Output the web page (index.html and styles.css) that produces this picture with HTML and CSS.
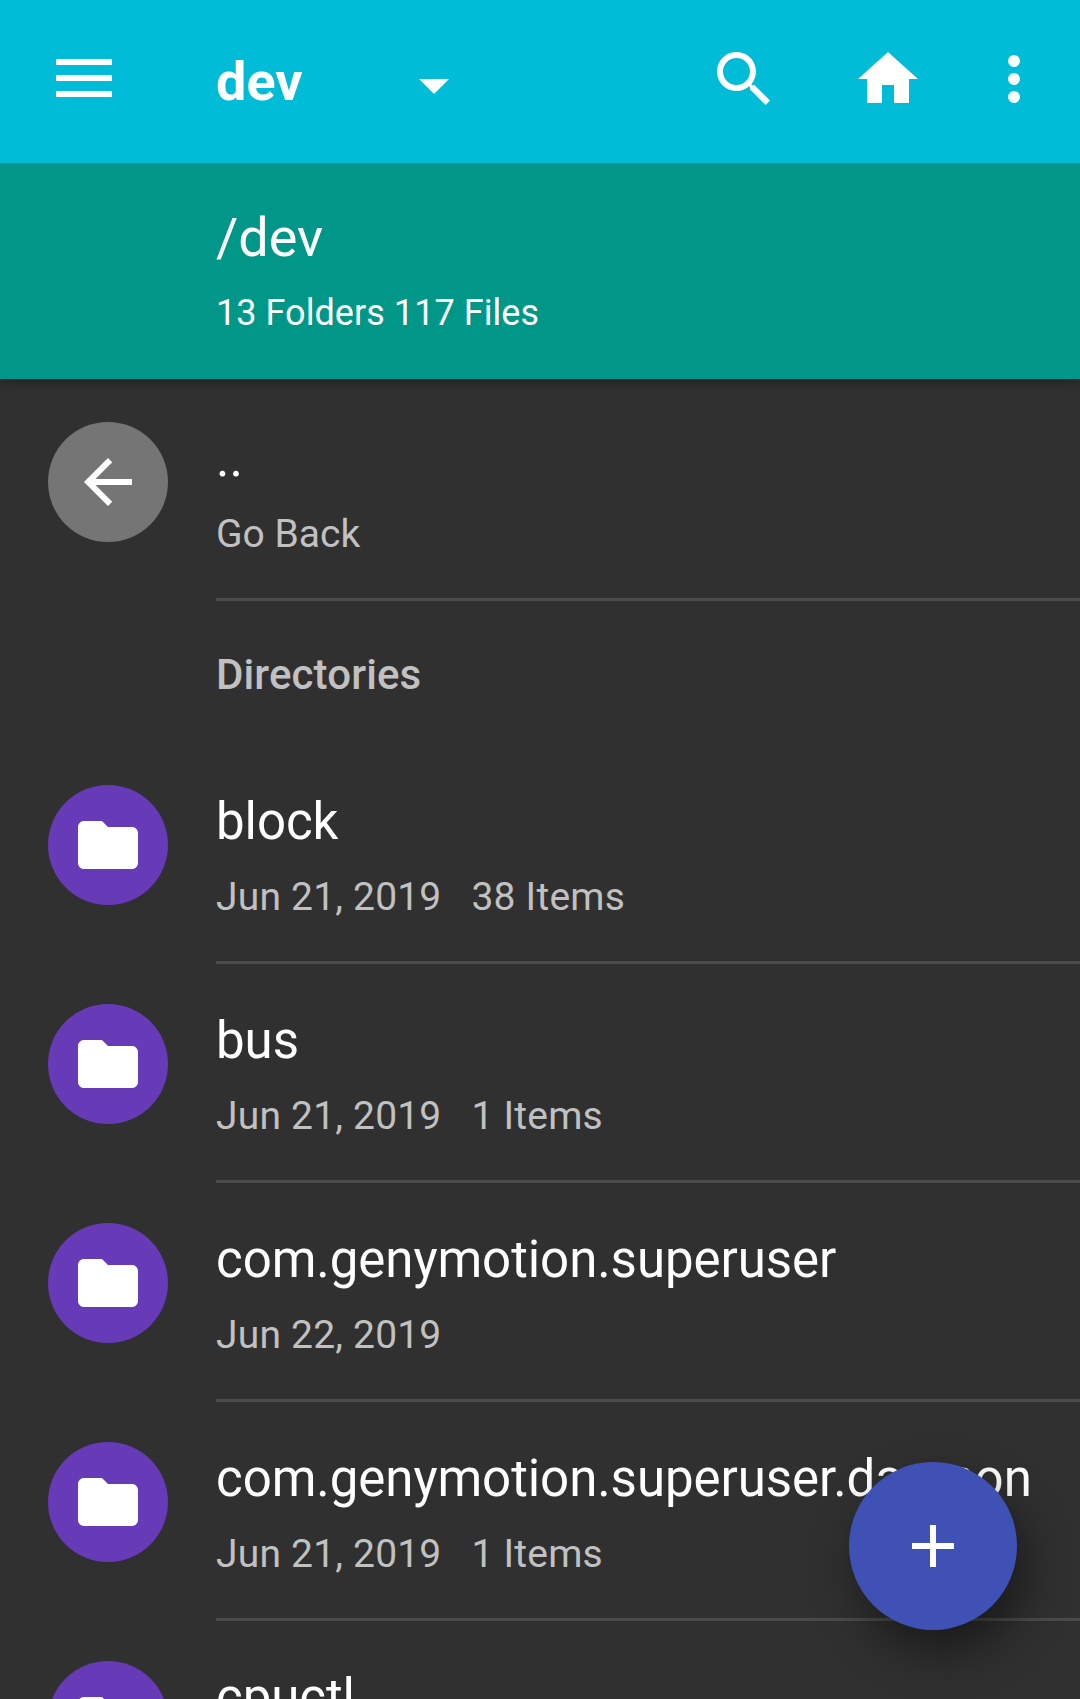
FILE: index.html
```html
<!DOCTYPE html>
<html lang="en">
<head>
<meta charset="utf-8">
<title>dev</title>
<link rel="stylesheet" href="styles.css">
</head>
<body>
<svg class="sprite" aria-hidden="true">
  <symbol id="folder" viewBox="0 0 24 24"><path d="M10 4H4c-1.1 0-2 .9-2 2v12c0 1.1.9 2 2 2h16c1.1 0 2-.9 2-2V8c0-1.1-.9-2-2-2h-8l-2-2z"/></symbol>
</svg>
<div class="app">
  <header class="toolbar">
    <svg class="menu" viewBox="0 0 56 38"><path d="M0 0h56v6H0zM0 16h56v6H0zM0 32h56v6H0z"/></svg>
    <h1 class="title">dev</h1>
    <svg class="caret" viewBox="0 0 30 15"><path d="M0 0h30L15 15z"/></svg>
    <nav class="actions">
      <svg class="icon" viewBox="0 0 24 24"><path d="M15.5 14h-.79l-.28-.27C15.41 12.59 16 11.11 16 9.5 16 5.91 13.09 3 9.5 3S3 5.91 3 9.5 5.91 16 9.5 16c1.61 0 3.09-.59 4.23-1.57l.27.28v.79l5.2 5.2 1.5-1.5-5.2-5.2zm-6 0C7.01 14 5 11.99 5 9.5S7.01 5 9.5 5 14 7.01 14 9.5 11.99 14 9.5 14z"/></svg>
      <svg class="icon" viewBox="0 0 24 24"><path d="M10 20v-6h4v6h5v-8h3L12 3 2 12h3v8z"/></svg>
      <svg class="icon more" viewBox="0 0 24 24"><circle cx="12" cy="6" r="2"/><circle cx="12" cy="12" r="2"/><circle cx="12" cy="18" r="2"/></svg>
    </nav>
  </header>
  <section class="pathbar">
    <div class="path">/dev</div>
    <div class="summary">13 Folders 117 Files</div>
  </section>
  <main class="list">
    <div class="row">
      <span class="avatar back"><svg class="icon" viewBox="0 0 24 24"><path d="M20 11H7.83l5.59-5.59L12 4l-8 8 8 8 1.41-1.41L7.83 13H20v-2z"/></svg></span>
      <div class="body"><div class="name">..</div><div class="meta hint"><span>Go Back</span></div></div>
    </div>
    <h2 class="section">Directories</h2>
    <div class="row">
      <span class="avatar"><svg class="icon"><use href="#folder"/></svg></span>
      <div class="body"><div class="name">block</div><div class="meta"><span>Jun 21, 2019</span><span>38 Items</span></div></div>
    </div>
    <div class="row">
      <span class="avatar"><svg class="icon"><use href="#folder"/></svg></span>
      <div class="body"><div class="name">bus</div><div class="meta"><span>Jun 21, 2019</span><span>1 Items</span></div></div>
    </div>
    <div class="row">
      <span class="avatar"><svg class="icon"><use href="#folder"/></svg></span>
      <div class="body"><div class="name">com.genymotion.superuser</div><div class="meta"><span>Jun 22, 2019</span></div></div>
    </div>
    <div class="row">
      <span class="avatar"><svg class="icon"><use href="#folder"/></svg></span>
      <div class="body"><div class="name">com.genymotion.superuser.daemon</div><div class="meta"><span>Jun 21, 2019</span><span>1 Items</span></div></div>
    </div>
    <div class="row">
      <span class="avatar"><svg class="icon"><use href="#folder"/></svg></span>
      <div class="body"><div class="name">cpuctl</div></div>
    </div>
  </main>
  <button class="fab" aria-label="Add"><svg class="icon" viewBox="0 0 24 24"><path d="M19 13h-6v6h-2v-6H5v-2h6V5h2v6h6z"/></svg></button>
</div>
</body>
</html>
```
FILE: styles.css
```css
* { box-sizing: border-box; }
body { margin: 0; background: #303030; font-family: Roboto, sans-serif; color: #fff; }
svg { fill: #fff; display: block; flex: none; }
.sprite { display: none; }
.app { position: relative; height: 1699px; overflow: hidden; display: flex; flex-direction: column; }
.toolbar { flex: none; height: 163px; padding: 0 30px 0 56px; background: #00bcd7; display: flex; align-items: flex-start; position: relative; z-index: 1; }
.menu { width: 56px; height: 38px; margin-top: 59px; }
.title { margin: 50px 0 0 104px; width: 203px; font-size: 54px; line-height: 64px; font-weight: 700; }
.caret { width: 30px; height: 15px; margin-top: 79px; }
.actions { margin: 43px 0 0 auto; display: flex; gap: 72px; }
.icon { width: 72px; height: 72px; }
.more { margin-left: -18px; }
.pathbar { flex: none; height: 216px; padding: 43px 0 0 216px; background: #009688; box-shadow: 0 3px 12px rgba(0,0,0,.3); position: relative; }
.path { font-size: 54px; line-height: 64px; }
.summary { margin-top: 19px; font-size: 36px; line-height: 48px; letter-spacing: .05px; }
.list { padding-top: 3px; }
.row { display: flex; height: 219px; padding-left: 48px; gap: 48px; overflow: hidden; }
.avatar { flex: none; margin-top: 40px; width: 120px; height: 120px; border-radius: 50%; background: #673ab7; display: grid; place-items: center; }
.back { background: #757575; }
.body { flex: 1; padding-top: 41px; border-bottom: 3px solid #4b4b4b; white-space: nowrap; }
.name { font-size: 51px; line-height: 72px; letter-spacing: -.06px; }
.meta { margin-top: 15px; display: flex; gap: 30px; font-size: 39px; line-height: 48px; letter-spacing: .2px; color: #c1c1c1; }
.hint { letter-spacing: 0; }
.section { margin: 0; height: 144px; padding: 3px 0 0 216px; font-size: 42px; line-height: 142px; font-weight: 500; letter-spacing: .12px; color: #c1c1c1; }
.fab { position: absolute; left: 849px; top: 1462px; width: 168px; height: 168px; padding: 0; border: 0; border-radius: 50%; background: #3f51b5; display: grid; place-items: center; box-shadow: 9px 22px 48px rgba(0,0,0,.46); }
```
